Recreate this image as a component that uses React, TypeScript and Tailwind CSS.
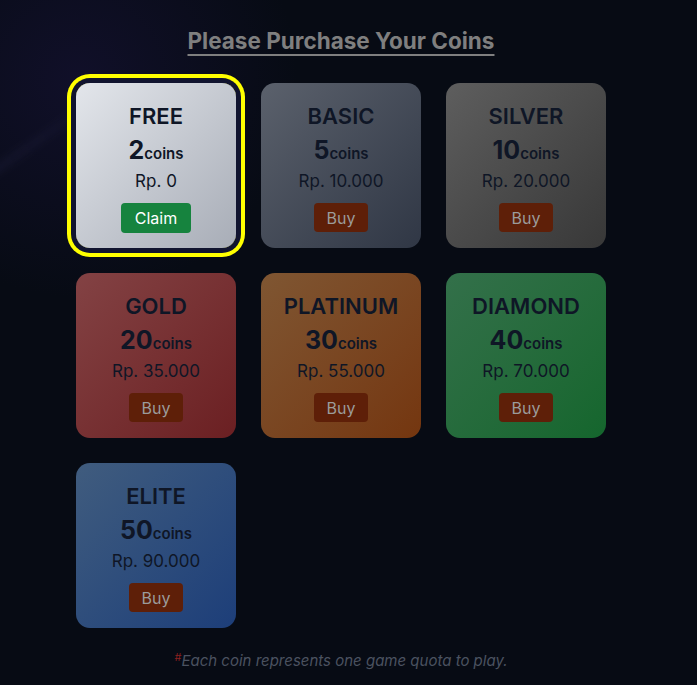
import React from 'react';

interface Plan {
  name: string;
  coins: number;
  price: string;
  card: string;
  free?: boolean;
}

const plans: Plan[] = [
  { name: 'FREE', coins: 2, price: 'Rp. 0', card: 'bg-gradient-to-br from-[#e3e6eb] to-[#a8adb7]', free: true },
  { name: 'BASIC', coins: 5, price: 'Rp. 10.000', card: 'bg-gradient-to-br from-[#5b616c] to-[#303745]' },
  { name: 'SILVER', coins: 10, price: 'Rp. 20.000', card: 'bg-gradient-to-br from-[#5e5e5e] to-[#383838]' },
  { name: 'GOLD', coins: 20, price: 'Rp. 35.000', card: 'bg-gradient-to-br from-[#834244] to-[#6b1f22]' },
  { name: 'PLATINUM', coins: 30, price: 'Rp. 55.000', card: 'bg-gradient-to-br from-[#7f5632] to-[#74360f]' },
  { name: 'DIAMOND', coins: 40, price: 'Rp. 70.000', card: 'bg-gradient-to-br from-[#33704a] to-[#14662d]' },
  { name: 'ELITE', coins: 50, price: 'Rp. 90.000', card: 'bg-gradient-to-br from-[#405c7e] to-[#1d3e79]' },
];

function CoinCard({ plan }: { plan: Plan }) {
  return (
    <div
      className={`${plan.card} h-[165px] w-[160px] rounded-[14px] flex flex-col items-center pt-[19px] text-[#0f1626] ${
        plan.free ? 'ring-4 ring-[#ffff00] ring-offset-[5px] ring-offset-[#11142f]' : ''
      }`}
    >
      <div className="text-[22px] font-semibold leading-[28px]">{plan.name}</div>
      <div className="mt-[4px] flex items-baseline leading-[32px]">
        <span className="text-[25px] font-bold">{plan.coins}</span>
        <span className="text-[15px] font-semibold">coins</span>
      </div>
      <div className="text-[17px] leading-[24px] -mt-[1px]">{plan.price}</div>
      <div className="mt-[10px]">
        {plan.free ? (
          <button className="h-[30px] w-[70px] rounded-[4px] bg-[#16833e] text-white text-[16px]">
            Claim
          </button>
        ) : (
          <button className="h-[29px] w-[54px] rounded-[4px] bg-[#5e1f08] text-[#9b9b9b] text-[16px]">
            Buy
          </button>
        )}
      </div>
    </div>
  );
}

export default function App() {
  return (
    <div
      className="relative min-h-[685px] w-full overflow-hidden bg-[#070b14]"
      style={{ fontFamily: 'Inter, "Noto Sans", sans-serif' }}
    >
      {/* background glow + streak */}
      <div className="pointer-events-none absolute -left-[140px] -top-[140px] h-[440px] w-[440px] rounded-full bg-[radial-gradient(circle,rgba(26,20,62,0.5)_0%,rgba(7,11,20,0)_70%)]" />
      <div className="pointer-events-none absolute left-[-30px] top-[120px] h-[10px] w-[180px] -rotate-[35deg] bg-gradient-to-r from-[rgba(50,50,90,0.18)] to-transparent blur-[3px]" />

      <div className="relative w-[682px] flex flex-col items-center pt-[26px]">
        <h1 className="text-[22.5px] font-bold text-[#7f7f7f] underline decoration-[2px] underline-offset-[5px] leading-[30px]">
          Please Purchase Your Coins
        </h1>

        <div className="mt-[27px] grid grid-cols-[160px_160px_160px] gap-[25px]">
          {plans.map((p) => (
            <CoinCard key={p.name} plan={p} />
          ))}
        </div>

        <p className="mt-[22px] text-[15px] italic text-[#4b5260]">
          <sup className="text-[#8a2020] not-italic text-[11px]">#</sup>
          Each coin represents one game quota to play.
        </p>
      </div>
    </div>
  );
}
